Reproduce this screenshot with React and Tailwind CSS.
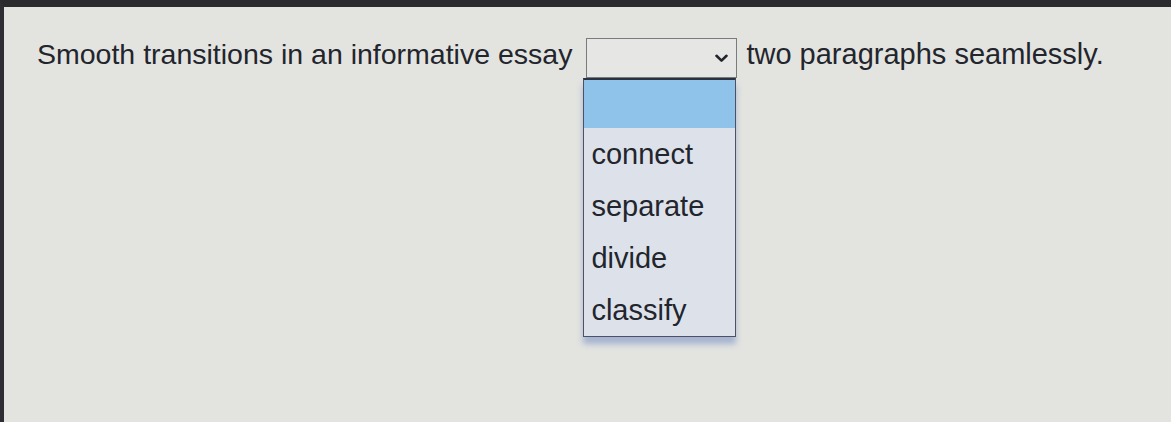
import { useState } from 'react';

const options = ['connect', 'separate', 'divide', 'classify'];

const Chevron = () => (
  <svg width="13" height="9" viewBox="0 0 13 9" fill="none">
    <path d="M1.5 1.8 L6.5 6.6 L11.5 1.8" stroke="#23252d" strokeWidth="2.6" strokeLinecap="round" strokeLinejoin="round" />
  </svg>
);

const InlineSelect = ({ value, open }) => (
  <div className="relative shrink-0">
    <div className="w-[151px] h-[40px] border border-[#7a7b7d] bg-[#e6e7e4] flex items-center justify-end pr-[8px]">
      <span className="flex-1 pl-[7px] text-[28px] leading-[30px]">{value}</span>
      <Chevron />
    </div>
    {open && (
      <ul className="absolute left-[-3px] top-[40px] w-[153px] bg-[#dde2ea] border border-t-2 border-[#4c5264] border-t-[#2e3140] shadow-[0_7px_6px_rgba(90,120,190,0.45)]">
        <li className="h-[48px] bg-[#8fc3ea]" />
        {options.map((opt) => (
          <li key={opt} className="h-[52px] flex items-center pl-[7px] text-[29px] leading-[32px] text-[#23252d]">
            {opt}
          </li>
        ))}
      </ul>
    )}
  </div>
);

export default function App() {
  const [value] = useState('');

  return (
    <div
      className="w-[1171px] h-[422px] bg-[#e3e4e0] border-t-[7px] border-t-[#2a2a2f] border-l-[4px] border-l-[#2d2d33] text-[#23252d] overflow-hidden"
      style={{ fontFamily: '"Liberation Sans", Arial, sans-serif' }}
    >
      <div className="flex items-start pt-[31px] pl-[33px]">
        <span className="text-[28.5px] leading-[32px] whitespace-nowrap">
          Smooth transitions in an informative essay
        </span>
        <div className="ml-[14px]">
          <InlineSelect value={value} open />
        </div>
        <span className="ml-[9px] text-[29px] leading-[32px] whitespace-nowrap">
          two paragraphs seamlessly.
        </span>
      </div>
    </div>
  );
}
